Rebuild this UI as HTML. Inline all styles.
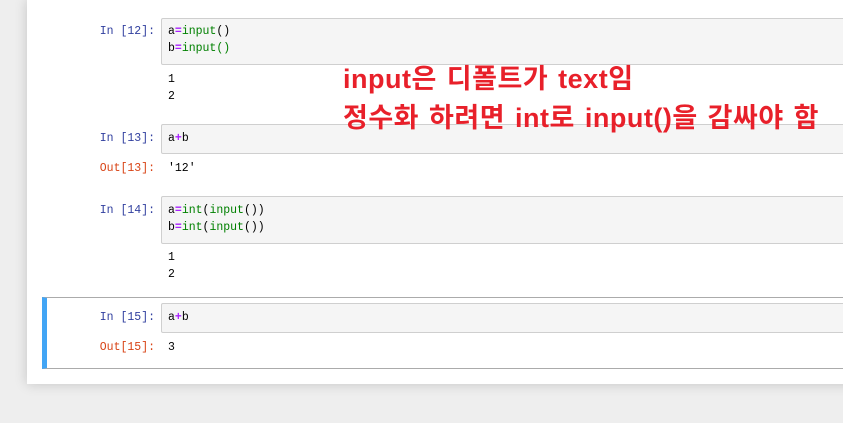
<!DOCTYPE html>
<html><head><meta charset="utf-8"><style>
body{margin:0;width:843px;height:423px;background:#eeeeee;position:relative;overflow:hidden;font-family:"Liberation Mono","NanumGothic",monospace;font-size:12px;}
.page{position:absolute;left:27px;top:0;width:830px;height:384px;background:#fff;box-shadow:0 0 12px rgba(0,0,0,0.18);}
.box{position:absolute;left:161px;right:-2px;background:#f5f5f5;border:1px solid #cfcfcf;border-radius:2px;}
.code{position:absolute;left:168px;line-height:17px;color:#000;white-space:pre;font-size:11.5px;}
.pin{position:absolute;right:688px;color:#303f9f;line-height:17px;white-space:pre;font-size:11.5px;}
.pout{position:absolute;right:688px;color:#d84315;line-height:17px;white-space:pre;font-size:11.5px;}
.g{color:#008000}.m{color:#aa22ff;font-weight:bold}
.sel{position:absolute;left:42px;right:-2px;top:297px;height:70px;border:1px solid #ababab;border-left:5px solid #42a5f5;}
.red{position:absolute;left:343px;color:#e8202a;font-family:"Liberation Sans","Noto Sans CJK KR",sans-serif;font-weight:bold;font-size:27px;line-height:32px;white-space:pre;letter-spacing:0.5px;word-spacing:2px;}
</style></head><body>
<div class="page"></div>
<div class="sel"></div>
<div class="box" style="top:18px;height:45px"></div>
<div class="pin" style="top:23px">In [12]:</div>
<div class="code" style="top:23px">a<span class="m">=</span><span class="g">input</span>()
b<span class="m">=</span><span class="g">input()</span></div>
<div class="code" style="top:71px">1
2</div>
<div class="box" style="top:124px;height:28px"></div>
<div class="pin" style="top:130px">In [13]:</div>
<div class="code" style="top:130px">a<span class="m">+</span>b</div>
<div class="pout" style="top:160px">Out[13]:</div>
<div class="code" style="top:160px">'12'</div>
<div class="box" style="top:196px;height:46px"></div>
<div class="pin" style="top:202px">In [14]:</div>
<div class="code" style="top:202px">a<span class="m">=</span><span class="g">int</span>(<span class="g">input</span>())
b<span class="m">=</span><span class="g">int</span>(<span class="g">input</span>())</div>
<div class="code" style="top:249px">1
2</div>
<div class="box" style="top:303px;height:28px"></div>
<div class="pin" style="top:309px">In [15]:</div>
<div class="code" style="top:309px">a<span class="m">+</span>b</div>
<div class="pout" style="top:339px">Out[15]:</div>
<div class="code" style="top:339px">3</div>
<div class="red" style="top:63px">input은 디폴트가 text임</div>
<div class="red" style="top:102px">정수화 하려면 int로 input()을 감싸야 함</div>
</body></html>
